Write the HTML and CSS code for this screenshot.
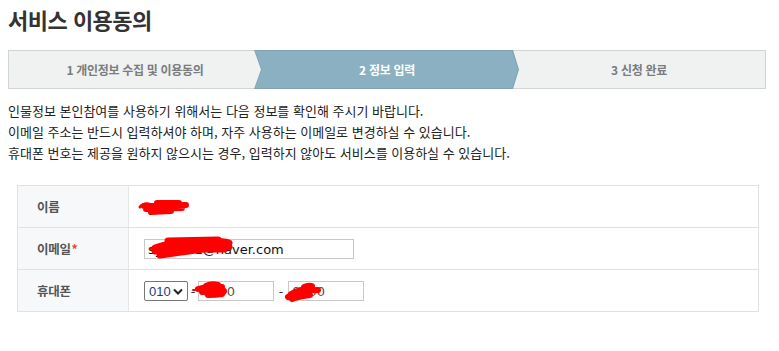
FILE: index.html
```html
<!DOCTYPE html>
<html lang="ko">
<head>
    <meta charset="UTF-8">
    <title>서비스 이용동의</title>
    <link rel="stylesheet" href="styles.css">
</head>
<body>
    <h1 class="title">서비스 이용동의</h1>

    <ol class="steps">
        <li class="step">1 개인정보 수집 및 이용동의</li>
        <li class="step step-on">2 정보 입력</li>
        <li class="step">3 신청 완료</li>
    </ol>

    <div class="guide">
        <p>인물정보 본인참여를 사용하기 위해서는 다음 정보를 확인해 주시기 바랍니다.</p>
        <p>이메일 주소는 반드시 입력하셔야 하며, 자주 사용하는 이메일로 변경하실 수 있습니다.</p>
        <p>휴대폰 번호는 제공을 원하지 않으시는 경우, 입력하지 않아도 서비스를 이용하실 수 있습니다.</p>
    </div>

    <table class="form-table">
        <tr>
            <th>이름</th>
            <td>
                <span class="mask">
                    <!-- 가림 처리 -->
                    <svg width="56" height="20" viewBox="0 0 56 20">
                        <path d="M7 9 L49 8 M9 12 L45 11 M14 15 L34 14 M20 6 L42 6" stroke="#f00" stroke-width="6" stroke-linecap="round"/>
                        <path d="M3 10 C6 7 10 6 14 8" stroke="#f00" stroke-width="3" stroke-linecap="round" fill="none"/>
                    </svg>
                </span>
            </td>
        </tr>
        <tr>
            <th>이메일<em>*</em></th>
            <td>
                <span class="field">
                    <input type="text" class="inp-mail" value="sykim01@naver.com">
                    <svg class="mask-over mask-mail" width="88" height="24" viewBox="0 0 88 24">
                        <path d="M7 12 C18 8 32 6 48 6 C62 5 74 5 81 7 M7 15 C20 12 36 11 52 10 C64 9 74 9 81 11 M12 19 C26 17 40 15 56 13 C64 13 70 13 76 13 M20 5 L70 4" stroke="#f00" stroke-width="7" stroke-linecap="round" fill="none"/>
                        <path d="M2 13 L8 12" stroke="#f00" stroke-width="2" stroke-linecap="round"/>
                    </svg>
                </span>
            </td>
        </tr>
        <tr>
            <th>휴대폰</th>
            <td>
                <span class="sel-wrap">
                    <select class="sel-tel">
                        <option>010</option>
                        <option>011</option>
                        <option>016</option>
                    </select>
                    <svg class="sel-arrow" width="10" height="7" viewBox="0 0 10 7">
                        <path d="M1 1.5 L5 5.5 L9 1.5" stroke="#222" stroke-width="2" fill="none"/>
                    </svg>
                </span><span class="dash">-</span><span class="field">
                    <input type="text" class="inp-tel" value="0000">
                    <svg class="mask-over mask-tel1" width="38" height="22" viewBox="0 0 38 22">
                        <path d="M6 9 C12 7 20 6 30 7 M10 12 C16 11 24 11 32 11 M14 6 C18 4 22 4 26 5 M16 15 C20 15 24 15 30 14" stroke="#f00" stroke-width="6" stroke-linecap="round" fill="none"/>
                        <path d="M1 10 L8 10" stroke="#f00" stroke-width="2" stroke-linecap="round"/>
                    </svg>
                </span><span class="dash dash-2">-</span><span class="field">
                    <input type="text" class="inp-tel" value="0000">
                    <svg class="mask-over mask-tel2" width="42" height="22" viewBox="0 0 42 22">
                        <path d="M6 16 C10 13 14 11 22 10 C28 9 32 9 36 9 M9 13 C14 10 20 8 30 7 M10 18 C14 16 20 15 28 14 M22 6 C25 5 27 4 30 5" stroke="#f00" stroke-width="6" stroke-linecap="round" fill="none"/>
                    </svg>
                </span>
            </td>
        </tr>
    </table>
</body>
</html>
```

FILE: styles.css
```css
body {
    margin: 0;
    padding: 0 13px 0 8px;
    background-color: #fff;
    font-family: "Noto Sans CJK KR", "Noto Sans", sans-serif;
    color: #333;
}

.title {
    margin: 3px 0 0;
    font-size: 22px;
    line-height: 32px;
    font-weight: bold;
    letter-spacing: -0.5px;
    color: #333;
}

/* 단계 표시 */
.steps {
    display: flex;
    margin: 15px 0 0;
    padding: 0;
    list-style: none;
    height: 37px;
    border: 1px solid #d2d4d4;
    background-color: #f0f1f1;
}

.step {
    position: relative;
    flex: 1;
    display: flex;
    align-items: center;
    justify-content: center;
    font-size: 12px;
    font-weight: bold;
    letter-spacing: -0.3px;
    color: #7a7c7d;
}

.step-on {
    color: #fff;
    z-index: 0;
}

.step-on::before,
.step-on::after {
    content: "";
    position: absolute;
    top: -1px;
    bottom: -1px;
    left: -7px;
    right: -6px;
    z-index: -1;
    clip-path: polygon(0 0, calc(100% - 6px) 0, 100% 50%, calc(100% - 6px) 100%, 0 100%, 7px 50%);
}

.step-on::before {
    background-color: #7ea4b5;
}

.step-on::after {
    top: 0;
    bottom: 0;
    left: -6px;
    right: -5px;
    background-color: #8ab0c1;
}

/* 안내 문구 */
.guide {
    margin-top: 11px;
    font-size: 13px;
    line-height: 21px;
    color: #222;
}

.guide p {
    margin: 0;
}

/* 입력 표 */
.form-table {
    margin: 22px 0 0 9px;
    width: 742px;
    border-collapse: collapse;
    border: 1px solid #e1e1e1;
}

.form-table th,
.form-table td {
    height: 41px;
    padding: 0;
    border-top: 1px solid #e1e1e1;
    border-bottom: 1px solid #e1e1e1;
}

.form-table th {
    width: 111px;
    padding-left: 19px;
    box-sizing: border-box;
    text-align: left;
    font-size: 12.5px;
    font-weight: bold;
    letter-spacing: -0.3px;
    color: #555;
    background-color: #f7f8fa;
    border-right: 1px solid #e6e6e6;
}

.form-table th em {
    font-style: normal;
    color: #e84a3c;
    margin-left: 1px;
}

.form-table td {
    padding-left: 15px;
    font-size: 13px;
    color: #222;
}

.mask {
    display: inline-block;
    margin-left: -7px;
    vertical-align: middle;
    line-height: 0;
}

.field {
    position: relative;
    display: inline-block;
    vertical-align: middle;
    line-height: 0;
}

input {
    box-sizing: border-box;
    height: 20px;
    margin: 0;
    padding: 0 3px;
    border: 1px solid #c8c8c8;
    font-family: "DejaVu Sans", sans-serif;
    font-size: 13px;
    color: #111;
    vertical-align: middle;
}

.inp-mail {
    width: 210px;
}

.inp-tel {
    width: 76px;
    color: #555;
}

.sel-wrap {
    position: relative;
    display: inline-block;
    vertical-align: middle;
    line-height: 0;
}

.sel-tel {
    box-sizing: border-box;
    width: 44px;
    height: 20px;
    margin: 0;
    padding: 0 0 0 4px;
    appearance: none;
    -webkit-appearance: none;
    font-family: "Liberation Sans", Arial, sans-serif;
    font-size: 13px;
    color: #1a3c7a;
    border: 1px solid #767676;
    border-radius: 2px;
    background-color: #fff;
}

.sel-arrow {
    position: absolute;
    right: 5px;
    top: 7px;
    pointer-events: none;
}

.dash {
    display: inline-block;
    width: 10px;
    text-align: center;
    vertical-align: middle;
    color: #333;
}

.dash-2 {
    width: 14px;
}

.mask-over {
    position: absolute;
}

.mask-mail {
    left: 4px;
    top: -3px;
}

.mask-tel1 {
    left: -6px;
    top: -1px;
}

.mask-tel2 {
    left: -6px;
    top: 0;
}
```
